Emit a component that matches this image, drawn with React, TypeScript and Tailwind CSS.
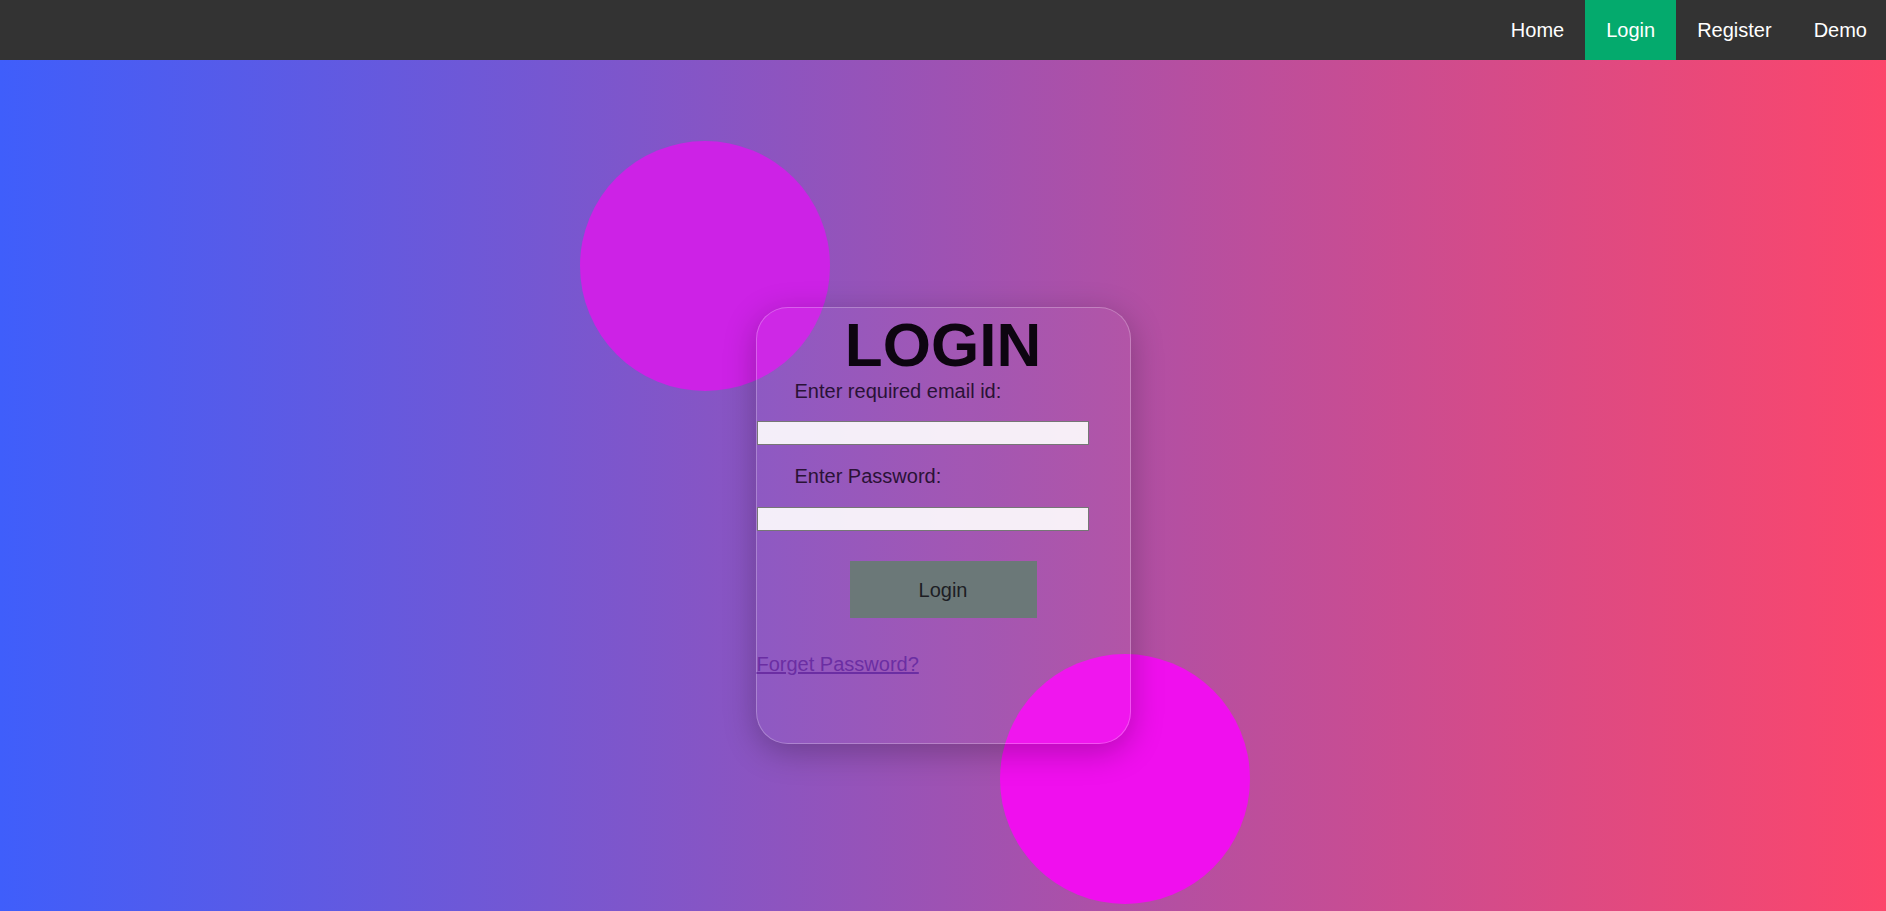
import React from "react";

const navItems = ["Home", "Login", "Register", "Demo"];

function TopNav() {
  return (
    <nav className="flex h-[60px] justify-end overflow-hidden bg-[#333333]">
      <div className="mr-[-2px] flex h-full">
        {navItems.map((item) => (
          <a
            key={item}
            href="#"
            className={`flex h-full items-center px-[21px] text-[20px] leading-[23px] text-white ${
              item === "Login" ? "bg-[#04aa6d]" : ""
            }`}
          >
            {item}
          </a>
        ))}
      </div>
    </nav>
  );
}

function LoginCard() {
  return (
    <div className="relative">
      <div className="absolute left-[-176px] top-[-166px] h-[250px] w-[250px] rounded-full bg-[#cd22e6]" />
      <div className="absolute left-[244px] top-[347px] h-[250px] w-[250px] rounded-full bg-[#f00fee]" />
      <div className="relative flex h-[437px] w-[375px] flex-col rounded-[32px] border border-white/25 bg-white/[0.03] shadow-[0_8px_32px_rgba(0,0,0,0.25)]">
        <h1 className="pt-[2px] text-center text-[62px] font-bold leading-[70px] text-[#0d0510]">
          LOGIN
        </h1>
        <label className="block pl-[38px] text-[20px] leading-[23px] text-[#2a1236]">
          Enter required email id:
        </label>
        <input
          type="email"
          className="mt-[18px] h-[24px] w-[332px] border border-[#767676] bg-white/90 outline-none"
        />
        <label className="mt-[20px] block pl-[38px] text-[20px] leading-[23px] text-[#2a1236]">
          Enter Password:
        </label>
        <input
          type="password"
          className="mt-[19px] h-[24px] w-[332px] border border-[#767676] bg-white/90 outline-none"
        />
        <button className="mx-auto mt-[30px] h-[57px] w-[187px] bg-[#6b7878] text-[20px] text-[#1d1e24]">
          Login
        </button>
        <a
          href="#"
          className="mt-[35px] self-start text-[20px] leading-[23px] text-[#6b2ea3] underline"
        >
          Forget Password?
        </a>
      </div>
    </div>
  );
}

export default function App() {
  return (
    <div
      className="h-[911px] overflow-hidden bg-[linear-gradient(90deg,#3f5efb,#fc466b)]"
      style={{ fontFamily: '"Liberation Sans", Arial, sans-serif' }}
    >
      <TopNav />
      <main className="flex justify-center pt-[247px]">
        <LoginCard />
      </main>
    </div>
  );
}
